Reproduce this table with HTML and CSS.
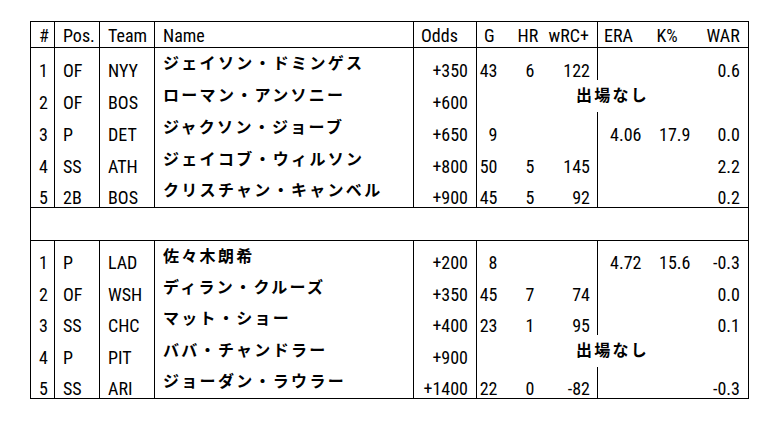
FILE: index.html
```html
<!DOCTYPE html>
<html lang="ja">
<head>
<meta charset="utf-8">
<link rel="stylesheet" href="styles.css">
</head>
<body>
<table class="odds">
  <colgroup>
    <col class="c-rank"><col class="c-pos"><col class="c-team"><col class="c-name"><col class="c-odds">
    <col class="c-g"><col class="c-hr"><col class="c-wrc"><col class="c-era"><col class="c-k"><col class="c-war">
  </colgroup>
  <thead>
    <tr class="head">
      <th class="b">#</th><th class="b">Pos.</th><th class="b">Team</th><th class="b">Name</th><th class="b odds-h">Odds</th>
      <th class="g">G</th><th class="hr">HR</th><th class="wrc b">wRC+</th><th class="era">ERA</th><th class="k">K%</th><th class="war">WAR</th>
    </tr>
  </thead>
  <tbody class="top">
    <tr><td class="b">1</td><td class="b">OF</td><td class="b">NYY</td><td class="b name">ジェイソン・ドミンゲス</td><td class="b num">+350</td><td class="num g">43</td><td class="num hr">6</td><td class="num wrc b">122</td><td class="num era"></td><td class="num k"></td><td class="num war">0.6</td></tr>
    <tr><td class="b">2</td><td class="b">OF</td><td class="b">BOS</td><td class="b name">ローマン・アンソニー</td><td class="b num">+600</td><td class="none" colspan="6">出場なし</td></tr>
    <tr><td class="b">3</td><td class="b">P</td><td class="b">DET</td><td class="b name">ジャクソン・ジョーブ</td><td class="b num">+650</td><td class="num g">9</td><td class="num hr"></td><td class="num wrc b"></td><td class="num era">4.06</td><td class="num k">17.9</td><td class="num war">0.0</td></tr>
    <tr><td class="b">4</td><td class="b">SS</td><td class="b">ATH</td><td class="b name">ジェイコブ・ウィルソン</td><td class="b num">+800</td><td class="num g">50</td><td class="num hr">5</td><td class="num wrc b">145</td><td class="num era"></td><td class="num k"></td><td class="num war">2.2</td></tr>
    <tr><td class="b">5</td><td class="b">2B</td><td class="b">BOS</td><td class="b name">クリスチャン・キャンベル</td><td class="b num">+900</td><td class="num g">45</td><td class="num hr">5</td><td class="num wrc b">92</td><td class="num era"></td><td class="num k"></td><td class="num war">0.2</td></tr>
    <tr class="gap"><td colspan="11"></td></tr>
  </tbody>
  <tbody class="bottom">
    <tr><td class="b">1</td><td class="b">P</td><td class="b">LAD</td><td class="b name">佐々木朗希</td><td class="b num">+200</td><td class="num g">8</td><td class="num hr"></td><td class="num wrc b"></td><td class="num era">4.72</td><td class="num k">15.6</td><td class="num war">-0.3</td></tr>
    <tr><td class="b">2</td><td class="b">OF</td><td class="b">WSH</td><td class="b name">ディラン・クルーズ</td><td class="b num">+350</td><td class="num g">45</td><td class="num hr">7</td><td class="num wrc b">74</td><td class="num era"></td><td class="num k"></td><td class="num war">0.0</td></tr>
    <tr><td class="b">3</td><td class="b">SS</td><td class="b">CHC</td><td class="b name">マット・ショー</td><td class="b num">+400</td><td class="num g">23</td><td class="num hr">1</td><td class="num wrc b">95</td><td class="num era"></td><td class="num k"></td><td class="num war">0.1</td></tr>
    <tr><td class="b">4</td><td class="b">P</td><td class="b">PIT</td><td class="b name">ババ・チャンドラー</td><td class="b num">+900</td><td class="none" colspan="6">出場なし</td></tr>
    <tr><td class="b">5</td><td class="b">SS</td><td class="b">ARI</td><td class="b name">ジョーダン・ラウラー</td><td class="b num">+1400</td><td class="num g">22</td><td class="num hr">0</td><td class="num wrc b">-82</td><td class="num era"></td><td class="num k"></td><td class="num war">-0.3</td></tr>
  </tbody>
</table>
</body>
</html>
```

FILE: styles.css
```css
html, body {
  margin: 0;
  padding: 0;
  background: #fff;
}

body {
  font-family: "Roboto Condensed", Roboto, "Noto Sans CJK JP", sans-serif;
  font-size: 18px;
  color: #000;
}

.odds {
  border-collapse: collapse;
  table-layout: fixed;
  width: 718px;
  margin: 21px 0 0 30px;
  border: 1px solid #000;
}

.c-rank { width: 24px; }
.c-pos { width: 45px; }
.c-team { width: 55px; }
.c-name { width: 259px; }
.c-odds { width: 63px; }
.c-g { width: 29px; }
.c-hr { width: 36px; }
.c-wrc { width: 56px; }
.c-era { width: 51px; }
.c-k { width: 50px; }
.c-war { width: 50px; }

th, td {
  padding: 0 0 0 8px;
  vertical-align: bottom;
  text-align: left;
  font-weight: 400;
  line-height: 18px;
  white-space: nowrap;
  overflow: visible;
}

.head th {
  height: 23px;
  padding-bottom: 2px;
  border-bottom: 1px solid #000;
}

.top tr {
  height: 32px;
}

.bottom tr {
  height: 31.6px;
}

.b {
  border-right: 1px solid #000;
}

th.odds-h { padding-left: 7px; }
th.g { padding-left: 7px; }
th.hr { padding-left: 12px; }
th.wrc { padding-left: 7px; }
th.era { padding-left: 6px; }
th.k { padding-left: 8px; }
th.war { padding-left: 8px; }

td.num {
  text-align: right;
  padding: 0 8px 0 0;
}
td.hr { padding-right: 7px; }
td.wrc { padding-right: 7px; }
td.era { padding-right: 7px; }
td.war { padding-right: 8px; }

td.name,
td.none {
  font-family: "Noto Sans CJK JP", sans-serif;
  font-size: 16px;
  font-weight: 700;
  letter-spacing: 2.3px;
  line-height: normal;
  vertical-align: middle;
  padding-bottom: 4px;
  color: #000;
}

td.none {
  text-align: center;
  padding-left: 0;
  padding-right: 0;
}

.top tr.gap {
  height: 33px;
}

tr.gap td {
  border-top: 1px solid #000;
  border-bottom: 1px solid #000;
  padding: 0;
}
```
